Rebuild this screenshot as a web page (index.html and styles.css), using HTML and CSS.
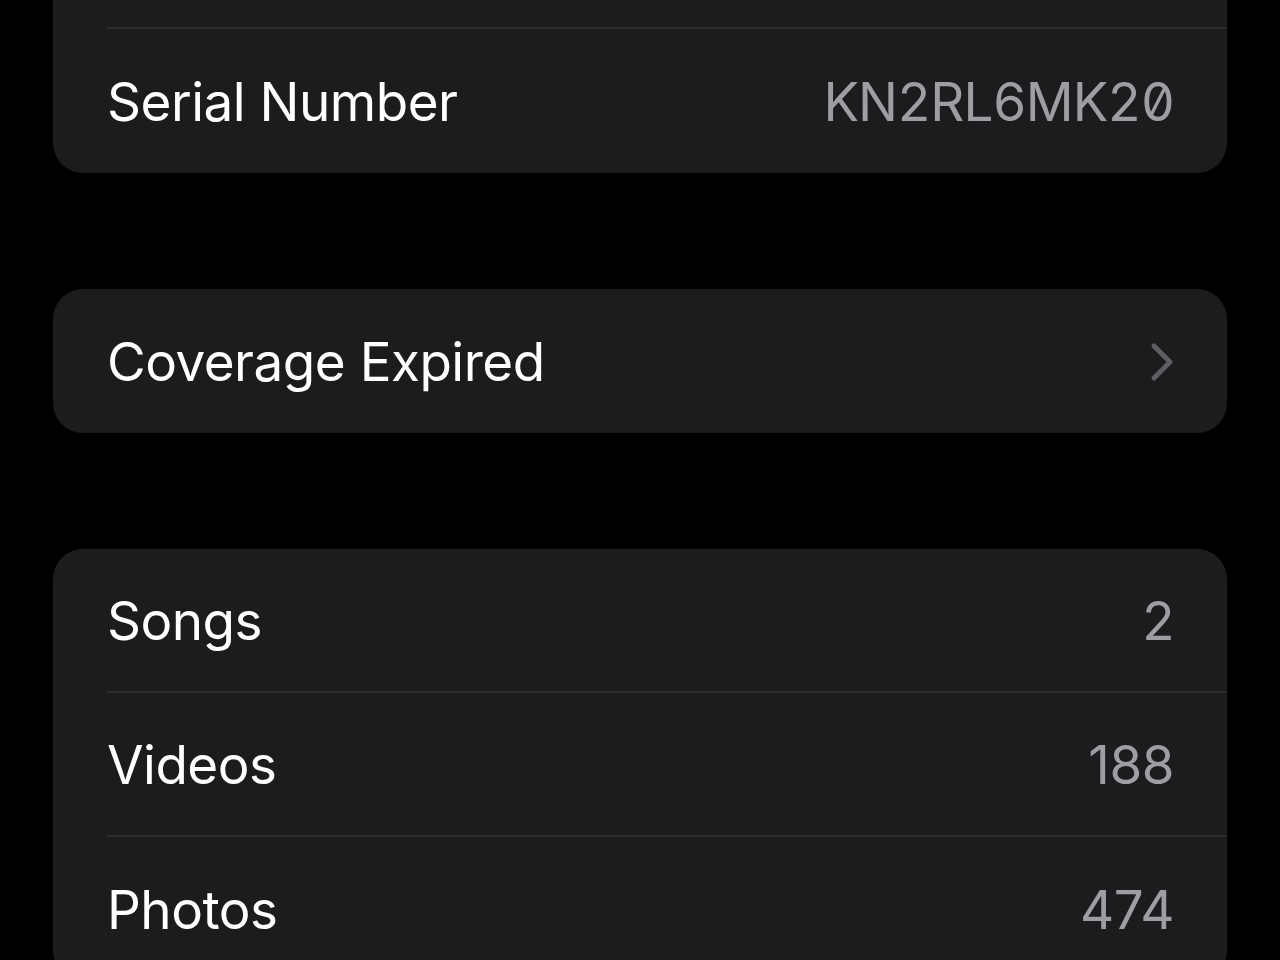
FILE: index.html
```html
<!DOCTYPE html>
<html lang="en">
<head>
    <meta charset="UTF-8">
    <meta name="viewport" content="width=device-width, initial-scale=1.0">
    <title>About</title>
    <link rel="stylesheet" href="styles.css">
</head>
<body>
    <div class="page">
        <div class="group first">
            <!-- row above is scrolled out of view -->
            <div class="row"></div>
            <div class="row">
                <span class="label">Serial Number</span>
                <span class="value serial">KN2RL6MK20</span>
            </div>
        </div>

        <div class="group">
            <div class="row">
                <span class="label">Coverage Expired</span>
                <svg class="chevron" width="24" height="40" viewBox="0 0 24 40">
                    <path d="M4 4 L20 20 L4 36" fill="none" stroke="#5d5d62" stroke-width="5" stroke-linecap="round" stroke-linejoin="round"/>
                </svg>
            </div>
        </div>

        <div class="group">
            <div class="row">
                <span class="label">Songs</span>
                <span class="value">2</span>
            </div>
            <div class="row">
                <span class="label">Videos</span>
                <span class="value">188</span>
            </div>
            <div class="row">
                <span class="label">Photos</span>
                <span class="value">474</span>
            </div>
        </div>
    </div>
</body>
</html>
```

FILE: styles.css
```css
body {
    margin: 0;
    background-color: #000;
    font-family: Inter, "Noto Sans", sans-serif;
    color: #fff;
    overflow: hidden;
}

.page {
    padding: 0 53px;
    display: flex;
    flex-direction: column;
    gap: 116px;
}

.group {
    background-color: #1c1c1e;
    border-radius: 30px;
    overflow: hidden;
}

.group.first {
    margin-top: -115px;
}

.row {
    height: 144px;
    margin-left: 54px;
    padding-right: 53px;
    padding-top: 1px;
    display: flex;
    align-items: center;
    justify-content: space-between;
    border-bottom: 2px solid #2e2e31;
    box-sizing: border-box;
}

.row:last-child {
    border-bottom: none;
}

.label {
    font-size: 53px;
    letter-spacing: -0.5px;
}

.value {
    font-size: 53px;
    color: #9d9da2;
    letter-spacing: -0.5px;
}

.serial {
    font-feature-settings: "zero", "tnum";
    letter-spacing: -1px;
}

.chevron {
    display: block;
}
```
